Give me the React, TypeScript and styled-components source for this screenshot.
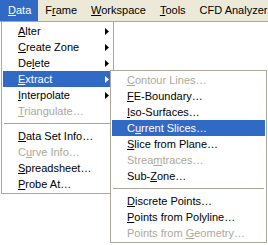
import React from "react";
import styled, { createGlobalStyle } from "styled-components";

const Global = createGlobalStyle`
  html, body { margin: 0; padding: 0; background: #ffffff; }
  body { font-family: "Liberation Sans", Arial, sans-serif; font-size: 11px; }
  u { text-decoration: underline; text-underline-offset: 1px; }
`;

const Page = styled.div`
  position: relative;
  width: 268px;
  height: 245px;
  overflow: hidden;
  background: #ffffff;
`;

const MenuBar = styled.div`
  display: flex;
  align-items: stretch;
  height: 21px;
  background: #ece9d8;
  border-bottom: 1px solid #aca899;
  white-space: nowrap;
`;

const BarItem = styled.div<{ $active?: boolean }>`
  display: flex;
  align-items: center;
  padding: 0 7px 0 ${(p) => (p.$active ? "8px" : "7px")};
  color: ${(p) => (p.$active ? "#ffffff" : "#000000")};
  background: ${(p) => (p.$active ? "#316ac5" : "transparent")};
  font-size: 11px;
  line-height: 21px;
`;

const Menu = styled.div<{ $left: number; $top: number; $width: number }>`
  position: absolute;
  left: ${(p) => p.$left}px;
  top: ${(p) => p.$top}px;
  width: ${(p) => p.$width}px;
  box-sizing: border-box;
  background: #ffffff;
  border: 1px solid #aca899;
  padding: 1px;
  display: flex;
  flex-direction: column;
`;

const Item = styled.div<{ $active?: boolean; $disabled?: boolean }>`
  display: flex;
  align-items: center;
  justify-content: space-between;
  height: 16px;
  padding: 0 3px 0 15px;
  font-size: 11px;
  line-height: 16px;
  white-space: nowrap;
  color: ${(p) => (p.$active ? "#ffffff" : p.$disabled ? "#aca899" : "#000000")};
  background: ${(p) => (p.$active ? "#316ac5" : "transparent")};
`;

const Separator = styled.div`
  height: 9px;
  display: flex;
  align-items: center;
  &::after {
    content: "";
    flex: 1;
    height: 1px;
    margin: 0 1px;
    background: #aca899;
  }
`;

const Arrow: React.FC<{ color: string }> = ({ color }) => (
  <svg width="4" height="7" viewBox="0 0 4 7" style={{ display: "block" }}>
    <polygon points="0,0 4,3.5 0,7" fill={color} />
  </svg>
);

type Entry =
  | { sep: true }
  | { sep?: false; pre: string; key: string; post: string; sub?: boolean; active?: boolean; disabled?: boolean };

const main: Entry[] = [
  { pre: "", key: "A", post: "lter", sub: true },
  { pre: "", key: "C", post: "reate Zone", sub: true },
  { pre: "De", key: "l", post: "ete", sub: true },
  { pre: "", key: "E", post: "xtract", sub: true, active: true },
  { pre: "", key: "I", post: "nterpolate", sub: true },
  { pre: "", key: "T", post: "riangulate…", disabled: true },
  { sep: true },
  { pre: "", key: "D", post: "ata Set Info…" },
  { pre: "C", key: "u", post: "rve Info…", disabled: true },
  { pre: "", key: "S", post: "preadsheet…" },
  { pre: "", key: "P", post: "robe At…" },
];

const extract: Entry[] = [
  { pre: "", key: "C", post: "ontour Lines…", disabled: true },
  { pre: "", key: "F", post: "E-Boundary…" },
  { pre: "", key: "I", post: "so-Surfaces…" },
  { pre: "C", key: "u", post: "rrent Slices…", active: true },
  { pre: "", key: "S", post: "lice from Plane…" },
  { pre: "Strea", key: "m", post: "traces…", disabled: true },
  { pre: "Sub-", key: "Z", post: "one…" },
  { sep: true },
  { pre: "", key: "D", post: "iscrete Points…" },
  { pre: "", key: "P", post: "oints from Polyline…" },
  { pre: "Points from ", key: "G", post: "eometry…", disabled: true },
];

const renderEntries = (entries: Entry[]) =>
  entries.map((e, i) =>
    e.sep ? (
      <Separator key={i} />
    ) : (
      <Item key={i} $active={e.active} $disabled={e.disabled}>
        <span>
          {e.pre}
          <u>{e.key}</u>
          {e.post}
        </span>
        {e.sub && <Arrow color={e.active ? "#ffffff" : "#000000"} />}
      </Item>
    )
  );

export default function App() {
  return (
    <Page>
      <Global />
      <MenuBar>
        <BarItem $active>
          <span><u>D</u>ata</span>
        </BarItem>
        <BarItem>
          <span>F<u>r</u>ame</span>
        </BarItem>
        <BarItem>
          <span><u>W</u>orkspace</span>
        </BarItem>
        <BarItem>
          <span><u>T</u>ools</span>
        </BarItem>
        <BarItem>
          <span>CFD Analyzer</span>
        </BarItem>
      </MenuBar>
      <Menu $left={1} $top={21} $width={113}>
        {renderEntries(main)}
      </Menu>
      <Menu $left={110} $top={70} $width={157}>
        {renderEntries(extract)}
      </Menu>
    </Page>
  );
}
